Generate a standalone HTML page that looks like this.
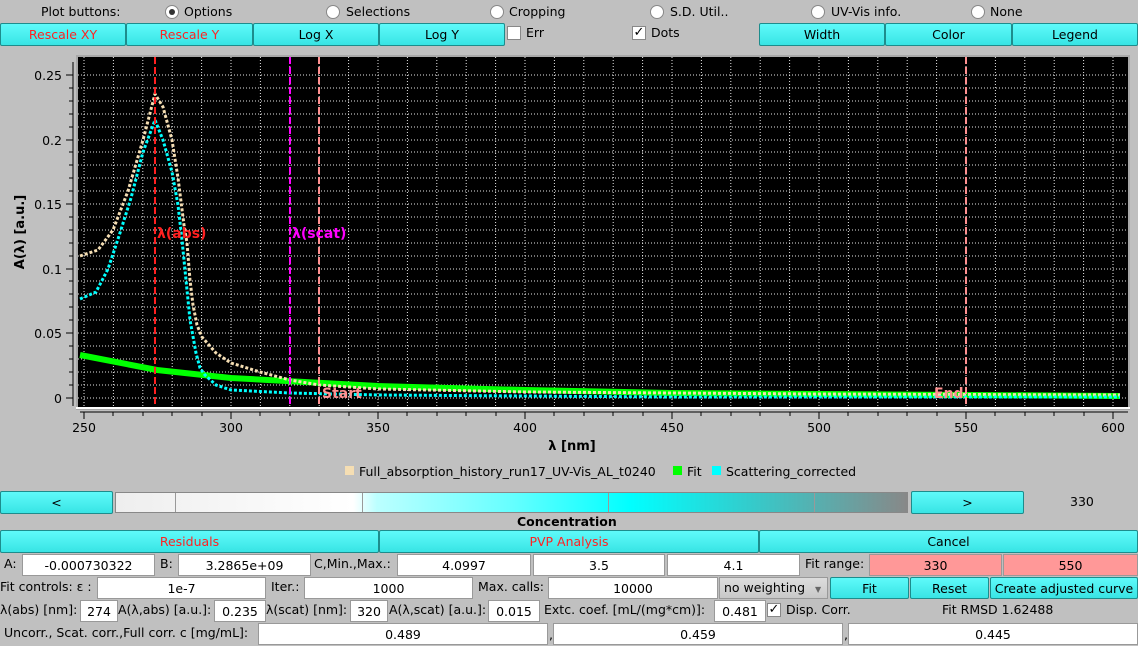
<!DOCTYPE html>
<html><head><meta charset="utf-8"><style>
*{box-sizing:border-box;margin:0;padding:0}
body{width:1138px;height:644px;background:#c0c0c0;font-family:"DejaVu Sans","Liberation Sans",sans-serif;font-size:12.5px;color:#000;position:relative;overflow:hidden}
.a{position:absolute;white-space:nowrap}
.b{position:absolute;background:linear-gradient(#5ffafa,#38e4e4);border:1px solid #1d8c8c;border-radius:2px;text-align:center;white-space:nowrap;display:flex;align-items:center;justify-content:center}
.r{color:#f22}
.i{position:absolute;background:#fff;border:1px solid #999;text-align:center;display:flex;align-items:center;justify-content:center;white-space:nowrap}
.pk{background:#ff9898}
.rad{position:absolute;width:14px;height:14px;border-radius:50%;background:#fff;border:1px solid #888}
.cb{position:absolute;width:14px;height:14px;background:#fff;border:1px solid #888;font-size:13px;line-height:12px;text-align:center;font-weight:bold}
.l{position:absolute;white-space:nowrap;line-height:22px}
</style></head><body>
<div class="l" style="left:41px;top:1px">Plot buttons:</div>
<div class="rad" style="left:165px;top:5px"><div style="width:6px;height:6px;border-radius:50%;background:#333;margin:3px"></div></div><div class="l" style="left:184px;top:1px">Options</div>
<div class="rad" style="left:326px;top:5px"></div><div class="l" style="left:346px;top:1px">Selections</div>
<div class="rad" style="left:490px;top:5px"></div><div class="l" style="left:509px;top:1px">Cropping</div>
<div class="rad" style="left:650px;top:5px"></div><div class="l" style="left:670px;top:1px">S.D. Util..</div>
<div class="rad" style="left:811px;top:5px"></div><div class="l" style="left:831px;top:1px">UV-Vis info.</div>
<div class="rad" style="left:971px;top:5px"></div><div class="l" style="left:990px;top:1px">None</div>

<div class="b r" style="left:0;top:23px;width:126px;height:23px">Rescale XY</div>
<div class="b r" style="left:126px;top:23px;width:127px;height:23px">Rescale Y</div>
<div class="b" style="left:253px;top:23px;width:126px;height:23px">Log X</div>
<div class="b" style="left:379px;top:23px;width:126px;height:23px">Log Y</div>
<div class="cb" style="left:507px;top:26px"></div><div class="l" style="left:526px;top:22px">Err</div>
<div class="cb" style="left:632px;top:26px">✓</div><div class="l" style="left:651px;top:22px">Dots</div>
<div class="b" style="left:759px;top:23px;width:126px;height:23px">Width</div>
<div class="b" style="left:885px;top:23px;width:127px;height:23px">Color</div>
<div class="b" style="left:1012px;top:23px;width:126px;height:23px">Legend</div>

<svg class="a" style="left:0;top:0" width="1138" height="490" font-family="DejaVu Sans, Liberation Sans, sans-serif">
<rect x="76" y="55" width="1054" height="355" fill="#a8a8a8"/>
<rect x="78" y="57" width="1050" height="350" fill="#000"/>
<rect x="76" y="407" width="1054" height="2" fill="#fff"/>
<g stroke="#fff" stroke-width="1" stroke-dasharray="1 2" opacity="0.9">
<path d="M78 75H1128M78 88H1128M78 101H1128M78 114H1128M78 127H1128M78 140H1128M78 152H1128M78 165H1128M78 178H1128M78 191H1128M78 204H1128M78 217H1128M78 230H1128M78 243H1128M78 256H1128M78 269H1128M78 281H1128M78 294H1128M78 307H1128M78 320H1128M78 333H1128M78 346H1128M78 359H1128M78 372H1128M78 385H1128M78 398H1128"/>
<path d="M84 57V407M113.4 57V407M142.8 57V407M172.2 57V407M201.6 57V407M231 57V407M260.4 57V407M289.8 57V407M319.2 57V407M348.6 57V407M378 57V407M407.4 57V407M436.8 57V407M466.2 57V407M495.6 57V407M525 57V407M554.4 57V407M583.8 57V407M613.2 57V407M642.6 57V407M672 57V407M701.4 57V407M730.8 57V407M760.2 57V407M789.6 57V407M819 57V407M848.4 57V407M877.8 57V407M907.2 57V407M936.6 57V407M966 57V407M995.4 57V407M1024.8 57V407M1054.2 57V407M1083.6 57V407M1113 57V407"/>
</g>
<polyline fill="none" stroke="#00ff00" stroke-width="6" points="80,355 157,370 231,378 378,386 525,390 672,393 819,394 1120,396"/>
<polyline fill="none" stroke="#f5deb3" stroke-width="3" stroke-dasharray="3 2" points="80,256 98,250 113,230 128,191 143,140 155,94 163,107 172,140 178,178 184,225 187,243 190,280 193,305 197,325 202,337 216,353 231,363 260,372 290,380 319,385 378,389 525,392 819,394 1120,395"/>
<polyline fill="none" stroke="#00ffff" stroke-width="3" stroke-dasharray="3 2" points="80,299 96,292 108,269 119,236 131,198 143,152 155,120 163,140 172,172 178,205 182,240 186,280 190,320 196,353 200,368 205,375 216,385 231,390 290,393 378,395 672,397 1120,397"/>
<g stroke-width="2" stroke-dasharray="7 3">
<path d="M155 57V407" stroke="#ff2020"/>
<path d="M290 57V407" stroke="#ff00ff"/>
<path d="M319 57V407" stroke="#ff9090"/>
<path d="M966 57V407" stroke="#ff9090"/>
</g>
<g font-weight="bold" font-size="14">
<text x="157" y="238" fill="#ff2020">λ(abs)</text>
<text x="292" y="238" fill="#ff00ff">λ(scat)</text>
<text x="322" y="398" fill="#ff9090">Start</text>
<text x="934" y="398" fill="#ff9090">End</text>
</g>
<g stroke="#000" stroke-width="1">
<path d="M73 62V406M66 75H73M66 140H73M66 204H73M66 269H73M66 333H73M66 398H73M69 88H73M69 101H73M69 114H73M69 127H73M69 152H73M69 165H73M69 178H73M69 191H73M69 217H73M69 230H73M69 243H73M69 256H73M69 281H73M69 294H73M69 307H73M69 320H73M69 346H73M69 359H73M69 372H73M69 385H73"/>
<path d="M80 412H1128M84 412V419M231 412V419M378 412V419M525 412V419M672 412V419M819 412V419M966 412V419M1113 412V419M113 412V416M143 412V416M172 412V416M202 412V416M260 412V416M290 412V416M319 412V416M349 412V416M407 412V416M437 412V416M466 412V416M496 412V416M554 412V416M584 412V416M613 412V416M643 412V416M701 412V416M731 412V416M760 412V416M790 412V416M848 412V416M878 412V416M907 412V416M937 412V416M995 412V416M1025 412V416M1054 412V416M1084 412V416"/>
</g>
<g font-size="12.5" text-anchor="end" fill="#000">
<text x="62" y="80">0.25</text><text x="62" y="145">0.2</text><text x="62" y="209">0.15</text><text x="62" y="274">0.1</text><text x="62" y="338">0.05</text><text x="62" y="403">0</text>
</g>
<g font-size="12.5" text-anchor="middle" fill="#000">
<text x="84" y="432">250</text><text x="231" y="432">300</text><text x="378" y="432">350</text><text x="525" y="432">400</text><text x="672" y="432">450</text><text x="819" y="432">500</text><text x="966" y="432">550</text><text x="1113" y="432">600</text>
<text x="572" y="450" font-weight="bold" font-size="13">λ [nm]</text>
<text transform="translate(24,232) rotate(-90)" font-weight="bold" font-size="13">A(λ) [a.u.]</text>
</g>
<rect x="345" y="466" width="9" height="9" fill="#f5deb3"/>
<text x="359" y="476" font-size="12.5">Full_absorption_history_run17_UV-Vis_AL_t0240</text>
<rect x="673" y="466" width="9" height="9" fill="#00ff00"/>
<text x="687" y="476" font-size="12.5">Fit</text>
<rect x="712" y="466" width="9" height="9" fill="#00ffff"/>
<text x="726" y="476" font-size="12.5">Scattering_corrected</text>
</svg>

<div class="b" style="left:0;top:491px;width:113px;height:23px">&lt;</div>
<div class="a" style="left:115px;top:492px;width:793px;height:21px;border:1px solid #888;background:linear-gradient(90deg,#eee 0%,#fff 30%,#bff 33%,#6ff 50%,#0ff 65%,#3cc 80%,#888 100%)">
<div class="a" style="left:59px;top:0;width:1px;height:19px;background:#999"></div>
<div class="a" style="left:246px;top:0;width:1px;height:19px;background:#999"></div>
<div class="a" style="left:492px;top:0;width:1px;height:19px;background:#999"></div>
<div class="a" style="left:698px;top:0;width:1px;height:19px;background:#999"></div>
</div>
<div class="b" style="left:911px;top:491px;width:113px;height:23px">&gt;</div>
<div class="l" style="left:1070px;top:491px">330</div>
<div class="l" style="left:517px;top:511px;font-weight:bold">Concentration</div>

<div class="b r" style="left:0;top:530px;width:379px;height:23px">Residuals</div>
<div class="b r" style="left:379px;top:530px;width:380px;height:23px">PVP Analysis</div>
<div class="b" style="left:759px;top:530px;width:379px;height:23px">Cancel</div>

<div class="l" style="left:4px;top:553px">A:</div>
<div class="i" style="left:22px;top:554px;width:133px;height:22px">-0.000730322</div>
<div class="l" style="left:160px;top:553px">B:</div>
<div class="i" style="left:178px;top:554px;width:133px;height:22px">3.2865e+09</div>
<div class="l" style="left:314px;top:553px">C,Min.,Max.:</div>
<div class="i" style="left:397px;top:554px;width:134px;height:22px">4.0997</div>
<div class="i" style="left:533px;top:554px;width:132px;height:22px">3.5</div>
<div class="i" style="left:667px;top:554px;width:133px;height:22px">4.1</div>
<div class="l" style="left:805px;top:553px">Fit range:</div>
<div class="i pk" style="left:869px;top:554px;width:133px;height:22px">330</div>
<div class="i pk" style="left:1003px;top:554px;width:135px;height:22px">550</div>

<div class="l" style="left:0;top:576px">Fit controls: ε :</div>
<div class="i" style="left:97px;top:577px;width:169px;height:22px">1e-7</div>
<div class="l" style="left:271px;top:576px">Iter.:</div>
<div class="i" style="left:304px;top:577px;width:169px;height:22px">1000</div>
<div class="l" style="left:478px;top:576px">Max. calls:</div>
<div class="i" style="left:548px;top:577px;width:170px;height:22px">10000</div>
<div class="a" style="left:719px;top:577px;width:109px;height:22px;background:linear-gradient(#ddd,#c8c8c8);border:1px solid #999;line-height:20px;padding-left:4px">no weighting <span style="font-size:8px;color:#666;margin-left:6px">▼</span></div>
<div class="b" style="left:830px;top:577px;width:79px;height:22px">Fit</div>
<div class="b" style="left:910px;top:577px;width:79px;height:22px">Reset</div>
<div class="b" style="left:990px;top:577px;width:148px;height:22px">Create adjusted curve</div>

<div class="l" style="left:0;top:599px">λ(abs) [nm]:</div>
<div class="i" style="left:80px;top:600px;width:38px;height:22px">274</div>
<div class="l" style="left:118px;top:599px">A(λ,abs) [a.u.]:</div>
<div class="i" style="left:214px;top:600px;width:52px;height:22px">0.235</div>
<div class="l" style="left:266px;top:599px">λ(scat) [nm]:</div>
<div class="i" style="left:350px;top:600px;width:38px;height:22px">320</div>
<div class="l" style="left:389px;top:599px">A(λ,scat) [a.u.]:</div>
<div class="i" style="left:488px;top:600px;width:52px;height:22px">0.015</div>
<div class="l" style="left:544px;top:599px">Extc. coef. [mL/(mg*cm)]:</div>
<div class="i" style="left:714px;top:600px;width:52px;height:22px">0.481</div>
<div class="cb" style="left:767px;top:603px">✓</div>
<div class="l" style="left:786px;top:599px">Disp. Corr.</div>
<div class="l" style="left:942px;top:599px">Fit RMSD 1.62488</div>

<div class="l" style="left:4px;top:622px">Uncorr., Scat. corr.,Full corr. c [mg/mL]:</div>
<div class="i" style="left:258px;top:623px;width:290px;height:22px">0.489</div>
<div class="l" style="left:549px;top:624px">,</div>
<div class="i" style="left:553px;top:623px;width:290px;height:22px">0.459</div>
<div class="l" style="left:844px;top:624px">,</div>
<div class="i" style="left:848px;top:623px;width:290px;height:22px">0.445</div>
</body></html>
